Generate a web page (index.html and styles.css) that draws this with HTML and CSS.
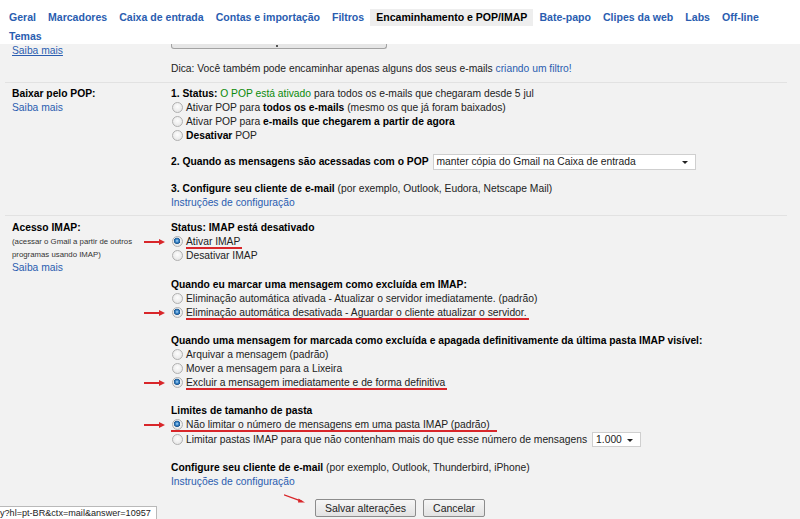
FILE: index.html
```html
<!doctype html>
<html lang="pt-BR">
  <head>
    <meta charset="UTF-8" />
    <title>Configurações - Encaminhamento e POP/IMAP</title>
    <link rel="stylesheet" href="styles.css">
  </head>
  <body>
    <div class="tabs">
      <a class="tab" href="#">Geral</a>
      <a class="tab" href="#">Marcadores</a>
      <a class="tab" href="#">Caixa de entrada</a>
      <a class="tab" href="#">Contas e importação</a>
      <a class="tab" href="#">Filtros</a>
      <span class="tab current">Encaminhamento e POP/IMAP</span>
      <a class="tab" href="#">Bate-papo</a>
      <a class="tab" href="#">Clipes da web</a>
      <a class="tab" href="#">Labs</a>
      <a class="tab" href="#">Off-line</a>
      <span class="tab-break"></span>
      <a class="tab" href="#">Temas</a>
    </div>

    <div class="settings">
      <div class="row row-top">
        <div class="label"><a class="link hover" href="#">Saiba mais</a></div>
        <div class="value">
          <div class="cut-button"></div>
          <div class="line tip">Dica: Você também pode encaminhar apenas alguns dos seus e-mails <a class="link" href="#">criando um filtro!</a></div>
        </div>
      </div>

      <div class="row row-pop">
        <div class="label">
          <div class="line"><b>Baixar pelo POP:</b></div>
          <div class="line"><a class="link" href="#">Saiba mais</a></div>
        </div>
        <div class="value">
          <div class="group">
            <div class="line"><b>1. Status:</b> <span class="ok">O POP está ativado</span> para todos os e-mails que chegaram desde 5 jul</div>
            <label class="opt"><span class="radio"></span>Ativar POP para <b>todos os e-mails</b> (mesmo os que já foram baixados)</label>
            <label class="opt"><span class="radio"></span>Ativar POP para <b>e-mails que chegarem a partir de agora</b></label>
            <label class="opt"><span class="radio"></span><b>Desativar</b> POP</label>
          </div>
          <div class="group">
            <div class="line with-select"><b>2. Quando as mensagens são acessadas com o POP</b> <span class="dropdown wide">manter cópia do Gmail na Caixa de entrada</span></div>
          </div>
          <div class="group">
            <div class="line"><b>3. Configure seu cliente de e-mail</b> (por exemplo, Outlook, Eudora, Netscape Mail)</div>
            <div class="line"><a class="link" href="#">Instruções de configuração</a></div>
          </div>
        </div>
      </div>

      <div class="row row-imap">
        <div class="label">
          <div class="line"><b>Acesso IMAP:</b></div>
          <div class="note">(acessar o Gmail a partir de outros<br>programas usando IMAP)</div>
          <div class="line"><a class="link" href="#">Saiba mais</a></div>
        </div>
        <div class="value">
          <div class="group">
            <div class="line"><b>Status: IMAP está desativado</b></div>
            <label class="opt pointed"><span class="radio checked"></span><span class="mark">Ativar IMAP</span></label>
            <label class="opt"><span class="radio"></span>Desativar IMAP</label>
          </div>
          <div class="group">
            <div class="line"><b>Quando eu marcar uma mensagem como excluída em IMAP:</b></div>
            <label class="opt"><span class="radio"></span>Eliminação automática ativada - Atualizar o servidor imediatamente. (padrão)</label>
            <label class="opt pointed"><span class="radio checked"></span><span class="mark">Eliminação automática desativada - Aguardar o cliente atualizar o servidor.</span></label>
          </div>
          <div class="group">
            <div class="line"><b>Quando uma mensagem for marcada como excluída e apagada definitivamente da última pasta IMAP visível:</b></div>
            <label class="opt"><span class="radio"></span>Arquivar a mensagem (padrão)</label>
            <label class="opt"><span class="radio"></span>Mover a mensagem para a Lixeira</label>
            <label class="opt pointed"><span class="radio checked"></span><span class="mark">Excluir a mensagem imediatamente e de forma definitiva</span></label>
          </div>
          <div class="group">
            <div class="line"><b>Limites de tamanho de pasta</b></div>
            <label class="opt pointed"><span class="mark wide-mark"><span class="radio checked"></span>Não limitar o número de mensagens em uma pasta IMAP (padrão)</span></label>
            <label class="opt with-select"><span class="radio"></span>Limitar pastas IMAP para que não contenham mais do que esse número de mensagens <span class="dropdown small">1.000</span></label>
          </div>
          <div class="group">
            <div class="line"><b>Configure seu cliente de e-mail</b> (por exemplo, Outlook, Thunderbird, iPhone)</div>
            <div class="line"><a class="link" href="#">Instruções de configuração</a></div>
          </div>
        </div>
      </div>
    </div>

    <div class="actions">
      <span class="save-wrap">
        <svg class="arrow-diag" width="22" height="10" viewBox="0 0 22 10">
          <path d="M0 0.8L18 7.4" stroke="#d8262a" stroke-width="1.4" fill="none" />
          <polygon points="14.5,4.6 21,8.6 14,8.4" fill="#d8262a" />
        </svg>
        <button class="btn">Salvar alterações</button>
      </span>
      <button class="btn">Cancelar</button>
    </div>

    <div class="status-bubble">y?hl=pt-BR&amp;ctx=mail&amp;answer=10957</div>
  </body>
</html>
```

FILE: styles.css
```css
body {
  margin: 0;
  background-color: #f2f2f2;
  font-family: "Liberation Sans", Arial, sans-serif;
  font-size: 10.3px;
  color: #222;
  position: relative;
  min-height: 519px;
}
b {
  color: #000;
}
.tabs {
  display: flex;
  flex-wrap: wrap;
  row-gap: 1px;
  background-color: #fff;
  padding: 9px 0 0 3px;
  height: 35px;
}
.tab {
  padding: 0 6px;
  line-height: 17px;
  font-size: 10.55px;
  font-weight: bold;
  color: #2a5db0;
  text-decoration: none;
  white-space: nowrap;
}
.tab.current {
  color: #000;
  background-color: #eeeeee;
}
.tab-break {
  flex-basis: 100%;
  height: 0;
}
.settings {
  margin: 0 13px 0 5px;
}
.row {
  display: grid;
  grid-template-columns: 159px 1fr;
  padding-left: 7px;
}
.row + .row {
  border-top: 1px solid #e2e2e2;
}
.line,
.opt {
  display: block;
  line-height: 14px;
  white-space: nowrap;
}
.link {
  color: #2a5db0;
  text-decoration: none;
}
.link.hover {
  text-decoration: underline;
}
.ok {
  color: #0a8a0a;
}
.row-top {
  padding-bottom: 6px;
}
.row-top .label {
  line-height: 14px;
}
.cut-button {
  width: 214px;
  height: 4px;
  border: 1px solid #a3a3a3;
  border-top: none;
  border-radius: 0 0 3px 3px;
  background-color: #e6e6e6;
  position: relative;
}
.cut-button::after {
  content: "";
  position: absolute;
  left: 104px;
  top: 1px;
  width: 2px;
  height: 2px;
  background-color: #555;
}
.tip {
  margin-top: 13px;
}
.row-pop {
  padding-top: 4px;
  padding-bottom: 5px;
}
.row-pop .group + .group {
  margin-top: 11px;
}
.row-pop .group:last-child {
  margin-top: 12px;
}
.row-imap {
  padding-top: 5px;
  padding-bottom: 4px;
}
.row-imap .group + .group {
  margin-top: 14px;
}
.row-imap .group:nth-child(2) {
  margin-top: 15px;
}
.note {
  font-size: 7.8px;
  line-height: 13px;
  color: #333;
}
.with-select {
  display: flex;
  align-items: center;
  gap: 4px;
}
.row-pop .with-select {
  height: 16px;
}
.opt.with-select {
  gap: 0;
}
.opt.with-select .dropdown {
  margin-left: 5px;
}
.dropdown {
  display: inline-flex;
  align-items: center;
  box-sizing: border-box;
  background-color: #fff;
  border: 1px solid #cfcfcf;
  padding-left: 3px;
  color: #222;
  font-weight: normal;
  position: relative;
}
.dropdown::after {
  content: "";
  position: absolute;
  right: 7px;
  top: 50%;
  margin-top: -1px;
  border-left: 3px solid transparent;
  border-right: 3px solid transparent;
  border-top: 3px solid #222;
}
.dropdown.wide {
  width: 263px;
  height: 16px;
}
.dropdown.small {
  width: 49px;
  height: 15px;
}
.radio {
  display: inline-block;
  box-sizing: border-box;
  width: 11px;
  height: 11px;
  margin: 0 3px 0 1px;
  vertical-align: -2px;
  border-radius: 50%;
  border: 1px solid #b0b0b0;
  background: radial-gradient(circle at 50% 40%, #fdfdfd 0, #e9e9e9 70%, #dcdcdc 100%);
}
.radio.checked {
  background:
    radial-gradient(circle at 45% 42%, #b6dcf8 0, #3a85c8 1.6px, #1d578f 3px, rgba(0, 0, 0, 0) 3.4px),
    radial-gradient(circle at 50% 40%, #fdfdfd 0, #e9e9e9 70%, #dcdcdc 100%);
}
.pointed {
  position: relative;
}
.pointed::before {
  content: "";
  position: absolute;
  left: -27px;
  top: 6px;
  width: 17px;
  height: 1.5px;
  background-color: #d8262a;
}
.pointed::after {
  content: "";
  position: absolute;
  left: -12px;
  top: 4px;
  border-top: 3px solid transparent;
  border-bottom: 3px solid transparent;
  border-left: 6px solid #d8262a;
}
.mark {
  position: relative;
}
.mark::after {
  content: "";
  position: absolute;
  left: 0;
  right: -2px;
  bottom: -2px;
  height: 2px;
  background-color: #d8262a;
}
.wide-mark::after {
  right: -7px;
}
.actions {
  display: flex;
  justify-content: center;
  gap: 7px;
  margin-top: 6px;
}
.save-wrap {
  position: relative;
}
.arrow-diag {
  position: absolute;
  left: -31px;
  top: -5px;
}
.btn {
  height: 18px;
  padding: 0 9px;
  font-family: "Liberation Sans", Arial, sans-serif;
  font-size: 10.5px;
  color: #222;
  border: 1px solid #8c8c8c;
  border-radius: 2px;
  background: linear-gradient(#f6f6f6, #e2e2e2);
}
.status-bubble {
  position: absolute;
  left: 0;
  bottom: 0;
  width: 156px;
  height: 12px;
  line-height: 12px;
  background-color: #fff;
  border: 1px solid #b9b9b9;
  border-left: none;
  border-bottom: none;
  font-size: 9.1px;
  color: #222;
  white-space: nowrap;
  overflow: hidden;
}
```
